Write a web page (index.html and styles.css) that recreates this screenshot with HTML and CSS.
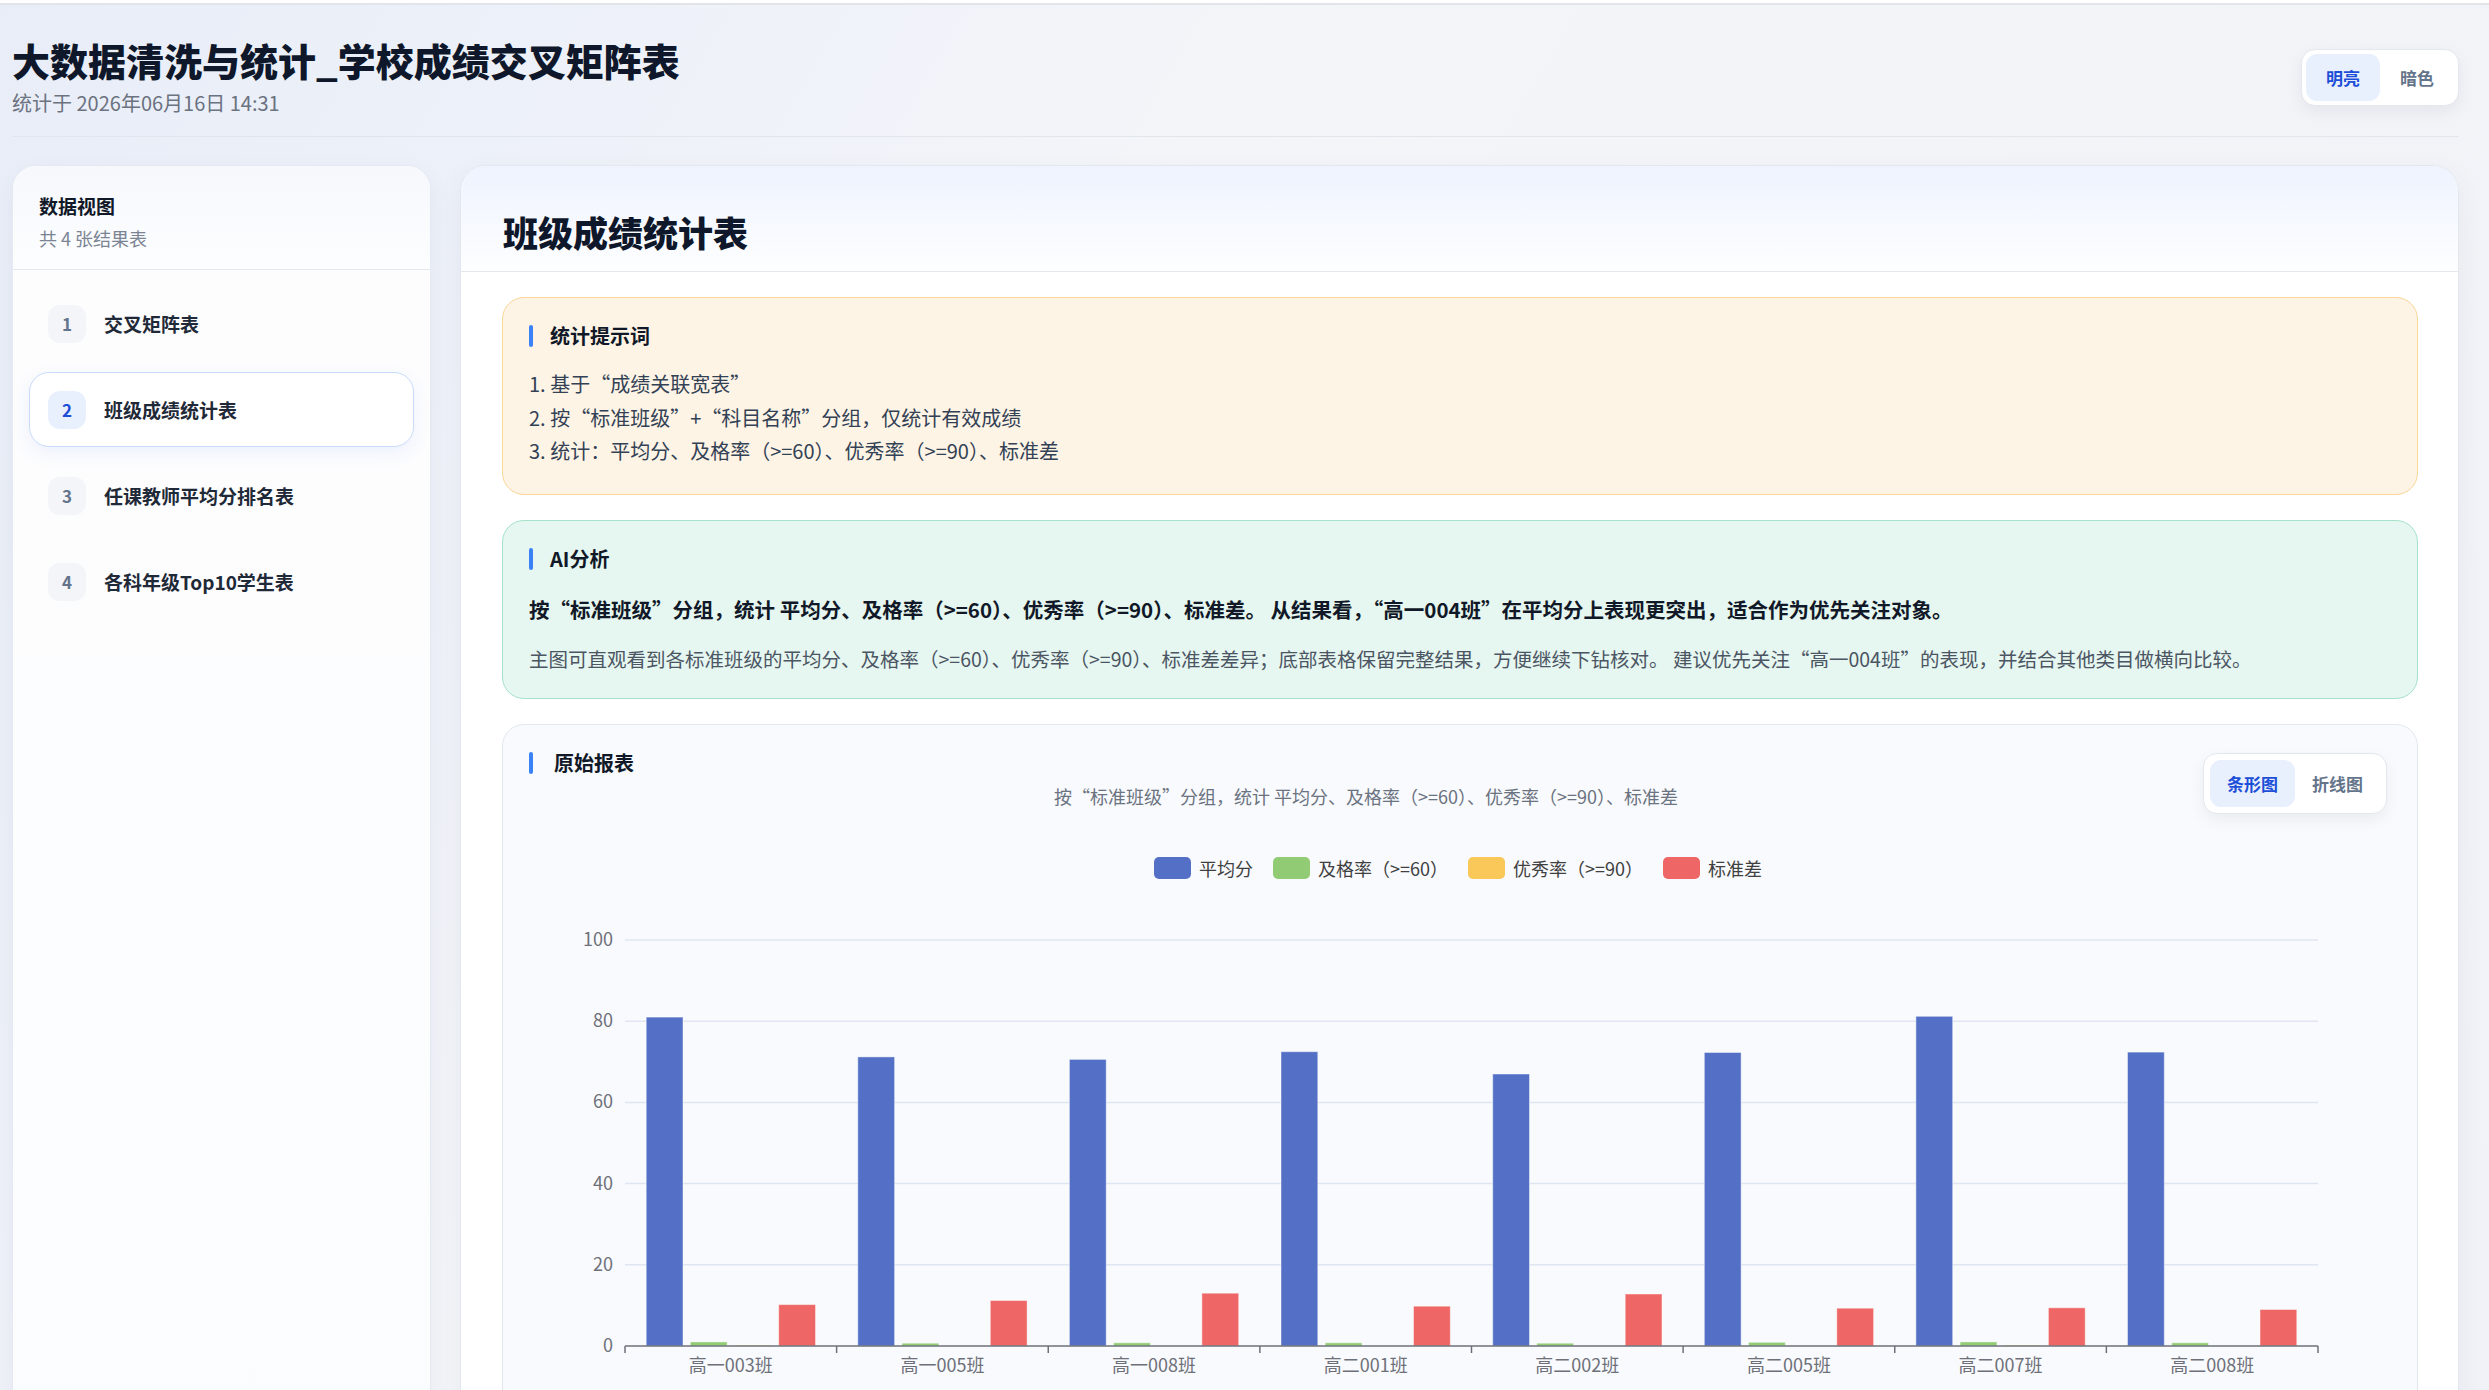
FILE: index.html
```html
<!DOCTYPE html>
<html lang="zh-CN">
<head>
  <meta charset="UTF-8">
  <meta name="viewport" content="width=device-width, initial-scale=1.0">
  <title>大数据清洗与统计_学校成绩交叉矩阵表</title>
  <link rel="stylesheet" href="styles.css">
</head>
<body>
  <!-- Top bar -->
  <header class="topbar">
    <div class="topbar-text">
      <h1 class="page-title">大数据清洗与统计_学校成绩交叉矩阵表</h1>
      <div class="page-meta">统计于 2026年06月16日 14:31</div>
    </div>
    <div class="seg seg-theme">
      <button class="seg-btn active">明亮</button>
      <button class="seg-btn">暗色</button>
    </div>
  </header>

  <div class="layout">
    <!-- Sidebar -->
    <aside class="sidebar">
      <div class="sidebar-head">
        <div class="sidebar-title">数据视图</div>
        <div class="sidebar-sub">共 4 张结果表</div>
      </div>
      <nav class="nav-list">
        <a class="nav-item" href="#"><span class="nav-no">1</span><span class="nav-label">交叉矩阵表</span></a>
        <a class="nav-item active" href="#"><span class="nav-no">2</span><span class="nav-label">班级成绩统计表</span></a>
        <a class="nav-item" href="#"><span class="nav-no">3</span><span class="nav-label">任课教师平均分排名表</span></a>
        <a class="nav-item" href="#"><span class="nav-no">4</span><span class="nav-label">各科年级Top10学生表</span></a>
      </nav>
    </aside>

    <!-- Report -->
    <main class="report">
      <div class="report-head">
        <h2>班级成绩统计表</h2>
      </div>
      <div class="report-body">
        <section class="note note-prompt">
          <div class="note-title">统计提示词</div>
          <ol class="prompt-list">
            <li>1. 基于“成绩关联宽表”</li>
            <li>2. 按“标准班级”+“科目名称”分组，仅统计有效成绩</li>
            <li>3. 统计：平均分、及格率（&gt;=60）、优秀率（&gt;=90）、标准差</li>
          </ol>
        </section>

        <section class="note note-ai">
          <div class="note-title">AI分析</div>
          <p class="ai-main">按“标准班级”分组，统计 平均分、及格率（&gt;=60）、优秀率（&gt;=90）、标准差。 从结果看，“高一004班”在平均分上表现更突出，适合作为优先关注对象。</p>
          <p class="ai-sub">主图可直观看到各标准班级的平均分、及格率（&gt;=60）、优秀率（&gt;=90）、标准差差异；底部表格保留完整结果，方便继续下钻核对。 建议优先关注“高一004班”的表现，并结合其他类目做横向比较。</p>
        </section>

        <section class="chart-card">
          <div class="chart-top">
            <div class="chart-titles">
              <div class="note-title">原始报表</div>
              <div class="chart-sub">按“标准班级”分组，统计 平均分、及格率（&gt;=60）、优秀率（&gt;=90）、标准差</div>
            </div>
            <div class="seg seg-chart">
              <button class="seg-btn active">条形图</button>
              <button class="seg-btn">折线图</button>
            </div>
          </div>

          <div class="legend">
            <span class="legend-item"><i class="swatch" style="background:#5470c6"></i>平均分</span>
            <span class="legend-item"><i class="swatch" style="background:#91cc75"></i>及格率（&gt;=60）</span>
            <span class="legend-item"><i class="swatch" style="background:#fac858"></i>优秀率（&gt;=90）</span>
            <span class="legend-item"><i class="swatch" style="background:#ee6666"></i>标准差</span>
          </div>

          <svg class="chart" id="chart" height="520"></svg>
        </section>
      </div>
    </main>
  </div>

  <script>
    (function () {
      // class, 平均分, 及格率, 优秀率, 标准差
      const rows = [
        ["高一003班", 81.0, 1.0, 0.2, 10.2],
        ["高一005班", 71.2, 0.7, 0.0, 11.2],
        ["高一008班", 70.6, 0.8, 0.0, 13.0],
        ["高二001班", 72.5, 0.8, 0.0, 9.8],
        ["高二002班", 67.0, 0.7, 0.0, 12.8],
        ["高二005班", 72.3, 0.9, 0.0, 9.3],
        ["高二007班", 81.2, 1.0, 0.2, 9.4],
        ["高二008班", 72.4, 0.8, 0.0, 9.0]
      ];
      const colors = ["#5470c6", "#91cc75", "#fac858", "#ee6666"];

      const svg = document.getElementById("chart");
      const W = svg.clientWidth;
      const H = 520;
      svg.setAttribute("viewBox", `0 0 ${W} ${H}`);

      const gridLeft = 122, gridRight = W - 99, gridTop = 41, gridBottom = 447;
      const unit = (gridBottom - gridTop) / 100;
      const band = (gridRight - gridLeft) / rows.length;
      const barW = band * 0.8 / 4.6;
      const barGap = barW * 0.2;

      let out = "";

      // grid lines + y labels
      for (let v = 0; v <= 100; v += 20) {
        const y = gridBottom - v * unit;
        if (v > 0) {
          out += `<line x1="${gridLeft}" y1="${y}" x2="${gridRight}" y2="${y}" stroke="#e0e6f1" stroke-width="1.5"/>`;
        }
        out += `<text x="${gridLeft - 12}" y="${y + 6}" text-anchor="end" class="axis-label">${v}</text>`;
      }

      // bars
      rows.forEach((row, i) => {
        const x0 = gridLeft + band * i + band * 0.1;
        for (let s = 0; s < 4; s++) {
          const v = row[s + 1];
          if (v <= 0) continue;
          const h = Math.max(v * unit, 1);
          const x = x0 + s * (barW + barGap);
          out += `<rect x="${x.toFixed(1)}" y="${(gridBottom - h).toFixed(1)}" width="${barW.toFixed(1)}" height="${h.toFixed(1)}" fill="${colors[s]}" stroke="rgba(255,255,255,0.45)" stroke-width="1"/>`;
        }
      });

      // x axis
      out += `<line x1="${gridLeft}" y1="${gridBottom}" x2="${gridRight}" y2="${gridBottom}" stroke="#6e7079" stroke-width="1.5"/>`;
      for (let i = 0; i <= rows.length; i++) {
        const x = gridLeft + band * i;
        out += `<line x1="${x}" y1="${gridBottom}" x2="${x}" y2="${gridBottom + 7}" stroke="#6e7079" stroke-width="1.5"/>`;
      }
      rows.forEach((row, i) => {
        const x = gridLeft + band * i + band / 2;
        out += `<text x="${x}" y="${gridBottom + 26}" text-anchor="middle" class="axis-label">${row[0]}</text>`;
      });

      svg.innerHTML = out;
    })();
  </script>
</body>
</html>
```

FILE: styles.css
```css
html {
  background: #fff;
}

body {
  margin: 3px 0 0;
  border-top: 2px solid #e2e4e9;
  padding: 0 30px 40px 12px;
  min-height: 100vh;
  background: linear-gradient(120deg, #e8edf8 0%, #f3f5f9 38%, #f0f2f7 100%);
  font-family: "Noto Sans CJK SC", "Noto Sans", sans-serif;
  color: #111827;
}

button {
  font: inherit;
  cursor: pointer;
}

/* Top bar */
.topbar {
  display: flex;
  align-items: center;
  justify-content: space-between;
  padding: 33px 0 20px;
  border-bottom: 1px solid #e1e5ec;
}

.page-title {
  margin: 0;
  font-size: 38px;
  line-height: 44px;
  font-weight: 800;
  color: #0f172a;
}

.page-meta {
  margin-top: 8px;
  font-size: 20px;
  line-height: 26px;
  color: #6b7280;
}

/* Segmented switch */
.seg {
  display: flex;
  background: #fff;
  border: 1px solid #e3e7ee;
  border-radius: 14px;
  box-shadow: 0 6px 16px rgba(15, 23, 42, 0.06);
}

.seg-theme {
  padding: 4px;
}

.seg-chart {
  padding: 6px;
  margin-top: 4px;
}

.seg-btn {
  border: none;
  background: transparent;
  font-size: 17px;
  font-weight: 700;
  line-height: 47px;
  padding: 0 20px;
  border-radius: 11px;
  color: #64748b;
}

.seg-chart .seg-btn {
  padding: 0 17px;
}

.seg-btn.active {
  background: #e9f0fd;
  color: #1d4ed8;
}

/* Layout */
.layout {
  display: grid;
  grid-template-columns: 419px 1fr;
  gap: 29px;
  margin-top: 28px;
}

/* Sidebar */
.sidebar {
  background: linear-gradient(180deg, #fdfdfe, #fbfcfd);
  border: 1px solid #e5e9f1;
  border-radius: 24px;
  box-shadow: 0 8px 24px rgba(30, 41, 59, 0.05);
  overflow: hidden;
}

.sidebar-head {
  padding: 27px 26px 19px;
  border-bottom: 1px solid #e3e8f0;
  background: linear-gradient(180deg, #f6f8fc, #fcfdfe);
}

.sidebar-title {
  font-size: 19px;
  line-height: 26px;
  font-weight: 700;
  color: #111827;
}

.sidebar-sub {
  margin-top: 7px;
  font-size: 18px;
  line-height: 24px;
  color: #7b8494;
}

.nav-list {
  display: flex;
  flex-direction: column;
  gap: 11px;
  padding: 16px;
}

.nav-item {
  display: flex;
  align-items: center;
  gap: 18px;
  height: 75px;
  box-sizing: border-box;
  padding: 0 18px;
  border: 1px solid transparent;
  border-radius: 20px;
  text-decoration: none;
  color: #1f2937;
  font-size: 19px;
  font-weight: 700;
}

.nav-item.active {
  background: #fff;
  border-color: #c9dbfb;
  box-shadow: 0 6px 18px rgba(37, 99, 235, 0.08);
}

.nav-no {
  display: grid;
  place-items: center;
  width: 38px;
  height: 38px;
  border-radius: 12px;
  background: #f3f5f9;
  color: #64748b;
  font-size: 17px;
  font-weight: 700;
}

.nav-item.active .nav-no {
  background: #e9f0fd;
  color: #1d4ed8;
}

/* Report card */
.report {
  background: #fff;
  border: 1px solid #e3e8f0;
  border-radius: 26px;
  box-shadow: 0 10px 30px rgba(15, 23, 42, 0.05);
  overflow: hidden;
}

.report-head {
  padding: 43px 42px 16px;
  background: linear-gradient(180deg, #eef3fe, #fdfeff);
  border-bottom: 1px solid #e5e7eb;
}

.report-head h2 {
  margin: 0;
  font-size: 35px;
  line-height: 46px;
  font-weight: 800;
  color: #0f172a;
}

.report-body {
  display: flex;
  flex-direction: column;
  gap: 25px;
  padding: 25px 40px 40px 41px;
}

/* Note boxes */
.note {
  padding: 24px 26px 26px;
  border: 1px solid;
  border-radius: 22px;
}

.note-prompt {
  background: #fdf4e5;
  border-color: #f8d797;
}

.note-ai {
  background: #e6f6f0;
  border-color: #a5e2c9;
  padding-bottom: 24px;
}

.note-title {
  display: flex;
  align-items: center;
  gap: 17px;
  font-size: 20px;
  line-height: 28px;
  font-weight: 700;
  color: #111827;
}

.note-title::before {
  content: "";
  width: 4px;
  height: 22px;
  border-radius: 2px;
  background: #3b82f6;
}

.chart-titles .note-title {
  gap: 21px;
}

.prompt-list {
  list-style: none;
  margin: 17px 0 0;
  padding: 0;
  font-size: 20px;
  line-height: 33.5px;
  color: #334155;
}

.ai-main {
  margin: 21px 0 0;
  font-size: 20.5px;
  line-height: 30px;
  font-weight: 700;
  color: #111827;
}

.ai-sub {
  margin: 20px 0 0;
  font-size: 19.5px;
  line-height: 30px;
  color: #4b5563;
}

/* Chart card */
.chart-card {
  background: #f8fafd;
  border: 1px solid #e3e8f0;
  border-radius: 22px;
  padding: 24px 30px 20px 26px;
}

.chart-top {
  display: flex;
  align-items: flex-start;
}

.chart-titles {
  flex: 1;
}

.chart-sub {
  margin-top: 7px;
  text-align: center;
  font-size: 18px;
  line-height: 24px;
  color: #6b7280;
}

.legend {
  display: flex;
  justify-content: center;
  gap: 20px;
  margin-top: 43px;
}

.legend-item {
  display: flex;
  align-items: center;
  gap: 8px;
  font-size: 18px;
  line-height: 22px;
  color: #404040;
}

.swatch {
  width: 37px;
  height: 22px;
  border-radius: 5px;
}

.chart {
  display: block;
  width: calc(100% + 56px);
  margin: 20px -30px 0 -26px;
}

.axis-label {
  font-family: "Noto Sans CJK SC", "Noto Sans", sans-serif;
  font-size: 18px;
  fill: #6e7079;
}
```
